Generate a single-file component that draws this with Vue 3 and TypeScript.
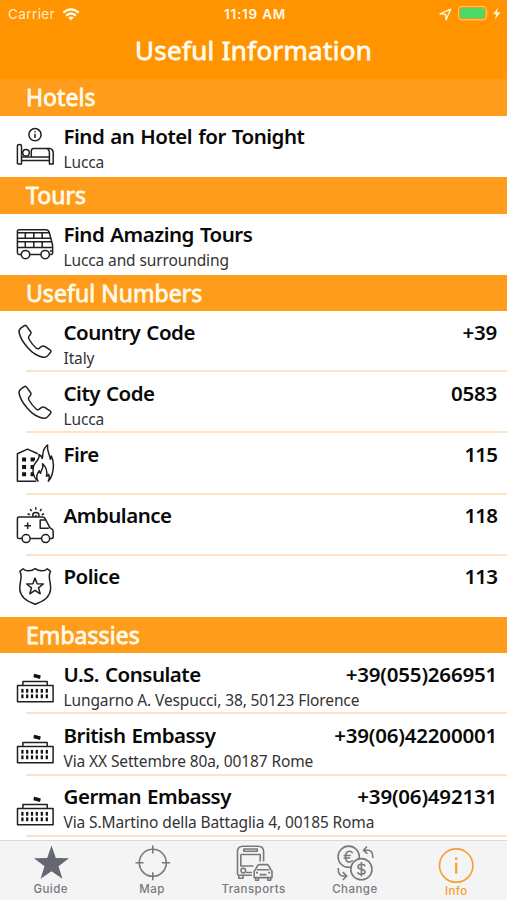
<script setup lang="ts">
type IconName = 'hotel' | 'bus' | 'phone' | 'fire' | 'ambulance' | 'police' | 'embassy'
type TabName = 'guide' | 'map' | 'transports' | 'change' | 'info'

interface Row {
  icon: IconName
  title: string
  detail?: string
  value?: string
}

interface Section {
  heading: string
  rows: Row[]
}

const sections: Section[] = [
  { heading: 'Hotels', rows: [{ icon: 'hotel', title: 'Find an Hotel for Tonight', detail: 'Lucca' }] },
  { heading: 'Tours', rows: [{ icon: 'bus', title: 'Find Amazing Tours', detail: 'Lucca and surrounding' }] },
  {
    heading: 'Useful Numbers',
    rows: [
      { icon: 'phone', title: 'Country Code', detail: 'Italy', value: '+39' },
      { icon: 'phone', title: 'City Code', detail: 'Lucca', value: '0583' },
      { icon: 'fire', title: 'Fire', value: '115' },
      { icon: 'ambulance', title: 'Ambulance', value: '118' },
      { icon: 'police', title: 'Police', value: '113' },
    ],
  },
  {
    heading: 'Embassies',
    rows: [
      { icon: 'embassy', title: 'U.S. Consulate', detail: 'Lungarno A. Vespucci, 38, 50123 Florence', value: '+39(055)266951' },
      { icon: 'embassy', title: 'British Embassy', detail: 'Via XX Settembre 80a, 00187 Rome', value: '+39(06)42200001' },
      { icon: 'embassy', title: 'German Embassy', detail: 'Via S.Martino della Battaglia 4, 00185 Roma', value: '+39(06)492131' },
    ],
  },
]

const tabs: { name: TabName; label: string }[] = [
  { name: 'guide', label: 'Guide' },
  { name: 'map', label: 'Map' },
  { name: 'transports', label: 'Transports' },
  { name: 'change', label: 'Change' },
  { name: 'info', label: 'Info' },
]

const activeTab: TabName = 'info'
const windowColumns = [22, 26.8, 31.6, 36.4, 41.4, 46.4]
</script>

<template>
  <div class="screen">
    <header class="header">
      <div class="status">
        <div class="carrier">
          <span>Carrier</span>
          <svg class="wifi" viewBox="0 0 18 13">
            <path d="M1.2 4.6 Q9 -2 16.8 4.6M4 7.7 Q9 3.3 14 7.7" fill="none" stroke="#fffbe8" stroke-width="2.3" />
            <path d="M9 12.4 L6.2 9.6 Q9 7.4 11.8 9.6Z" fill="#fffbe8" />
          </svg>
        </div>
        <span class="time">11:19 AM</span>
        <div class="power">
          <svg class="location" viewBox="0 0 13 13">
            <path d="M1 5.8 L11.6 1.2 L7.1 11.8 L6.5 6.4Z" fill="none" stroke="#fff6d8" stroke-width="1.4" stroke-linejoin="round" />
          </svg>
          <svg class="battery" viewBox="0 0 44 16">
            <rect x="0.6" y="0.6" width="27.6" height="13.2" rx="2.8" fill="none" stroke="#ffcb80" stroke-width="1" />
            <rect x="2.2" y="2.1" width="24.5" height="10.2" rx="1.3" fill="#4cd964" />
            <path d="M29.7 5 Q31.5 7.2 29.7 9.4Z" fill="#ffcb80" />
            <path d="M40 1.6 L35 8.2 H38.3 L36.9 13.4 L42.4 6.3 H39Z" fill="#fff6d8" />
          </svg>
        </div>
      </div>
      <h1 class="title">Useful Information</h1>
    </header>

    <main class="list">
      <section v-for="section in sections" :key="section.heading">
        <h2 class="heading">{{ section.heading }}</h2>
        <ul class="rows">
          <li v-for="row in section.rows" :key="row.title" class="row">
            <svg class="icon" viewBox="0 0 63 61">
              <g v-if="row.icon === 'hotel'">
                <circle cx="35" cy="18.7" r="6.1" />
                <path d="M35 17.7V22M35 15.2v1.3" />
                <path d="M17.4 48V30.2Q17.4 28.5 19.4 28.5Q21.5 28.5 21.5 30.2V41H31M17.4 48H21.5V44.6H49.4V48H53.2V36.3Q53 33.5 50.5 32.6H33.4Q31.3 32.8 31.3 35V41H49.4V36.2Q49.4 34 47.5 32.8M21.5 44.6V41M49.4 41V44.6M21.8 41H49.4" />
                <circle cx="26" cy="36.8" r="3.3" />
              </g>
              <g v-else-if="row.icon === 'bus'">
                <path d="M21 40.4H19Q17.4 40.4 17.4 38.8V17.5Q17.4 15.7 19.2 15.7H46Q48.3 15.7 49.2 18.2L52.6 31V39.2Q52.6 40.4 51.2 40.4H49.6M29.8 40.4H41" />
                <path d="M17.5 18.8H49.4M17.5 24.3H51M17.5 27.8H51.9M17.5 33.4H52.6M25.3 18.8V24.3M33.8 18.8V24.3M42.2 18.8V24.3M25.3 27.8V33.4M33.8 27.8V33.4M42.2 27.8V33.4M50 37H52.6" />
                <circle cx="25.5" cy="40.6" r="4.2" fill="#fff" />
                <circle cx="45.2" cy="40.6" r="4.2" fill="#fff" />
              </g>
              <g v-else-if="row.icon === 'phone'">
                <path d="M24.4 14.6Q25.6 14 26.5 15.1L30.7 20.7Q31.5 22 30.6 23.1L28.9 25.3Q28 26.4 28.9 28Q32 33.4 36.4 37.2Q37.6 38.3 39 37.3L41.6 35.4Q43.2 34.4 44.7 35.4L50 38.9Q51.5 39.9 50.6 41.2L48 44.4Q46.1 46.8 43 46.2C36.3 44.9 31.5 41.1 27.6 36.5C23.6 32 20.4 26.8 19.2 22Q18.5 19 20.8 17.2Z" />
              </g>
              <g v-else-if="row.icon === 'fire'">
                <path d="M36.2 48.2H17.4V20.7L27.5 16.1L37.8 20.7" />
                <path class="solid" d="M22.1 24.5h4v4h-4zM22.1 31.9h4v4h-4zM22.1 39.2h4v4h-4zM30.6 24.5h4.4v2.2l-1.2 1.8h-3.2zM30.6 31.9h3v4h-3zM30.6 39.2h3l1 4h-4z" />
                <path d="M38 48.2C34.4 45.5 32.2 40 33.3 34.2C34 30.4 36.6 28.7 38 26.5Q39.6 23.8 39 21.5Q41.7 22.8 42.2 25.5C43.8 21.1 41 17 47.6 12C46.5 17.8 49.8 21.4 50.3 26.2Q51.4 25.3 51.3 22.9C54 28.8 53.6 36.6 51.9 42C50.9 45 49.6 47 48.3 48.2Q50.2 44.6 48.6 41.3Q47.8 42.6 46.5 43.3C47.4 38.8 45.7 33.6 42.6 30.8C44 35.2 40.9 36.7 40.6 40.3Q39.5 39.5 39.3 37.8C36 42 36.4 45.7 38 48.2Z" />
              </g>
              <g v-else-if="row.icon === 'ambulance'">
                <path d="M22 43.6H19Q17.4 43.6 17.4 42V23.8Q17.4 22.1 19.2 22.1H43Q44.3 22.1 45 23.3L49.8 32.6L52.2 34.3Q53.2 35.2 53.2 36.7V41.8Q53.2 43.6 51.4 43.6H49.8M30.2 43.6H41.2" />
                <path d="M48.8 33.2H40.2V25H45.8M27.7 27.5V34.1M24.4 30.8H31M32.8 22V20Q32.8 17.5 35.8 17.5Q38.9 17.5 38.9 20V22M35.8 20.1V22" />
                <path d="M35.8 12.2V14.7M30.2 14L31.6 16.1M41.5 14L40 16.1M27.6 18.8L30 19.8M44.1 18.8L41.7 19.8" />
                <circle cx="26.1" cy="43.6" r="4" fill="#fff" />
                <circle cx="45.6" cy="43.6" r="4" fill="#fff" />
              </g>
              <g v-else-if="row.icon === 'police'">
                <path d="M23.1 12.7Q25.5 15.2 28.8 14.8Q32.4 14.6 35.2 12.6Q38 14.6 41.6 14.8Q44.9 15.2 47.3 12.7L50.5 15.4Q48.9 18.2 49.3 21.5C49.7 25.6 51 29.2 50.6 33.5C49.8 41.4 42.7 45.8 35.2 48.2C27.7 45.8 20.6 41.4 19.8 33.5C19.4 29.2 20.7 25.6 21.1 21.5Q21.5 18.2 19.9 15.4Z" />
                <path d="M35 22.1L37.1 27.7L43.3 28L38.5 31.8L40.2 37.8L35 34.3L29.8 37.8L31.5 31.8L26.7 28L32.9 27.7Z" />
              </g>
              <g v-else>
                <path d="M17.5 32.4H53.1V48.8H17.5ZM22.9 32.4V28.4H47.2V32.4" />
                <path class="solid" d="M34 20.8L37.3 21.4L40.8 22.6L40 26L36.6 24.9L33.4 24.3Z" />
                <g class="solid">
                  <rect v-for="x in windowColumns" :key="'u' + x" :x="x - 0.7" y="35.9" width="2.2" height="3.8" />
                  <rect v-for="x in windowColumns" :key="'l' + x" :x="x - 0.7" y="41.4" width="2.2" height="3.8" />
                </g>
              </g>
            </svg>
            <div class="body">
              <div class="line">
                <span class="name">{{ row.title }}</span>
                <span v-if="row.value" class="value" :class="{ tight: row.value.startsWith('11') }">{{ row.value }}</span>
              </div>
              <span v-if="row.detail" class="detail">{{ row.detail }}</span>
            </div>
          </li>
        </ul>
      </section>
    </main>

    <nav class="tabs">
      <a v-for="tab in tabs" :key="tab.name" class="tab" :class="{ active: tab.name === activeTab }">
        <svg class="glyph" viewBox="0 0 40 40">
          <path v-if="tab.name === 'guide'" class="star" d="M20.5 2.6L24.8 15.1L38 15.3L27.5 23.2L31.4 35.8L20.5 28.3L9.6 35.8L13.5 23.2L3 15.3L16.2 15.1Z" />
          <g v-else-if="tab.name === 'map'">
            <circle cx="20.8" cy="19.8" r="13.5" />
            <path d="M20.8 2.4V10.5M20.8 29.2V37.3M3.5 19.8H11.6M30 19.8H38.1" />
          </g>
          <g v-else-if="tab.name === 'transports'">
            <path d="M18 32.2H4.8Q3.5 32.2 3.5 30.8V8.5Q3.5 3.2 9 3.2H24Q29.6 3.2 29.6 8.5V18.5M6.8 11.5H26.2V18.5M6.8 11.5V23H19.5M9.8 6H23.3V8.2H9.8ZM4.8 32.2V35.2H9V32.2M12 29.5H18" />
            <circle cx="9.3" cy="27.6" r="2.3" />
            <path d="M20.2 28.5Q20.2 27.2 21.5 26.7L23.5 22.7Q24 21.6 25.2 21.6H33Q34.2 21.6 34.7 22.7L36.7 26.7Q38 27.2 38 28.5V34.6H20.2ZM23 26.7H35.2M21.6 34.6V37.3H24.5V34.6M33.8 34.6V37.3H36.7V34.6M25.7 31.6H32.5M22 29.6H24M34.2 29.6H36.2" />
          </g>
          <g v-else-if="tab.name === 'change'">
            <circle cx="13.7" cy="13.7" r="10.6" />
            <path d="M17.8 10Q16 8.1 13.8 8.3Q10.6 9 10.6 13.7Q10.6 18.4 13.8 19.1Q16 19.2 17.8 17.3M8.6 12.5H15.7M8.6 15H15.2" />
            <circle cx="26.4" cy="26.2" r="10.6" fill="#f4f4f5" />
            <path d="M30 23.2Q29.3 21.3 26.4 21.3Q23 21.5 23 23.7Q23 25.7 26.4 26.2Q30 26.8 30 29Q30 31.2 26.4 31.3Q23.3 31.3 22.7 29.2M26.4 19V33.5" />
            <path d="M32 3.5L28.5 7.3L32.5 10.6M28.8 7.2H33.5Q37.9 7.4 37.9 15M7.8 29.2L11.8 33L7.8 37M11.5 33H7.5Q3.2 32.7 3.2 25" />
          </g>
          <g v-else>
            <circle cx="20.2" cy="22.6" r="16.7" />
            <path d="M20.2 19.7V30.5" stroke-width="2.2" />
            <path d="M20.2 14.6V17" stroke-width="2.4" />
          </g>
        </svg>
        <span class="label">{{ tab.label }}</span>
      </a>
    </nav>
  </div>
</template>

<style>
body {
  margin: 0;
}
</style>

<style scoped>
.screen {
  display: flex;
  flex-direction: column;
  width: 507px;
  height: 900px;
  overflow: hidden;
  background: #fff;
  color: #090909;
  font-family: "Noto Sans", "Open Sans", sans-serif;
}

.header {
  flex: none;
  height: 79.3px;
  background: #ff9300;
  color: #fffbec;
}

.status {
  display: grid;
  grid-template-columns: 1fr auto 1fr;
  align-items: center;
  height: 28px;
  padding: 0 5px 0 8px;
  font-family: Inter, "Liberation Sans", sans-serif;
  font-size: 13.5px;
}

.carrier {
  display: flex;
  align-items: center;
  gap: 7px;
  color: #ffeec4;
  letter-spacing: 0.4px;
}

.wifi {
  width: 18px;
  height: 13px;
}

.time {
  font-weight: 600;
  font-size: 13.5px;
  letter-spacing: 0.8px;
}

.power {
  display: flex;
  align-items: center;
  justify-content: flex-end;
  gap: 6px;
}

.location {
  width: 13px;
  height: 13px;
}

.battery {
  width: 44px;
  height: 16px;
}

.title {
  margin: 0;
  font-size: 26px;
  font-weight: 400;
  letter-spacing: 0.3px;
  line-height: 44px;
  text-align: center;
  -webkit-text-stroke: 0.8px currentColor;
}

.list {
  flex: 1;
  min-height: 0;
  overflow: hidden;
}

.heading {
  box-sizing: border-box;
  height: 36.6px;
  margin: 0;
  padding-left: 26px;
  background: #ff9c1b;
  color: #fffbea;
  font-size: 23px;
  font-weight: 400;
  letter-spacing: 0.05px;
  line-height: 37px;
  -webkit-text-stroke: 0.8px currentColor;
}

.rows {
  margin: 0;
  padding: 0;
  list-style: none;
}

.row {
  display: flex;
  height: 61.1px;
}

.row:not(:last-child),
section:last-child .row {
  background: linear-gradient(#ffe2c4, #ffe2c4) 26px 100% / 100% 2px no-repeat;
}

.icon {
  flex: none;
  width: 63px;
  height: 61px;
  fill: none;
  stroke: #202020;
  stroke-width: 1.5;
  stroke-linejoin: round;
}

.solid {
  fill: #111;
  stroke: none;
}

.body {
  display: flex;
  flex: 1;
  flex-direction: column;
  padding: 6.6px 10px 0 0.5px;
}

.line {
  display: flex;
  justify-content: space-between;
  font-size: 20.5px;
  font-weight: 600;
  line-height: 28px;
  white-space: nowrap;
}

.name {
  letter-spacing: -0.5px;
  word-spacing: 1.2px;
}

.value {
  letter-spacing: -0.2px;
}

.tight {
  letter-spacing: -0.9px;
}

.detail {
  color: #333;
  font-size: 15.5px;
  letter-spacing: -0.12px;
  line-height: 25px;
  white-space: nowrap;
}

.tabs {
  display: flex;
  flex: none;
  box-sizing: border-box;
  height: 60.5px;
  border-top: 1px solid #d9d9dc;
  background: #f4f4f5;
}

.tab {
  display: flex;
  flex: 1 1 0;
  flex-direction: column;
  align-items: center;
  padding-top: 2.5px;
  color: #77797c;
}

.glyph {
  width: 40px;
  height: 40px;
  fill: none;
  stroke: currentColor;
  stroke-width: 1.6;
  stroke-linejoin: round;
}

.star {
  fill: #656871;
  stroke: none;
}

.label {
  font-family: Inter, "Liberation Sans", sans-serif;
  font-size: 11.5px;
  font-weight: 500;
  letter-spacing: 0.45px;
  line-height: 12px;
}

.active {
  color: #fa9d2c;
}

.active .label {
  padding-top: 2px;
}
</style>
